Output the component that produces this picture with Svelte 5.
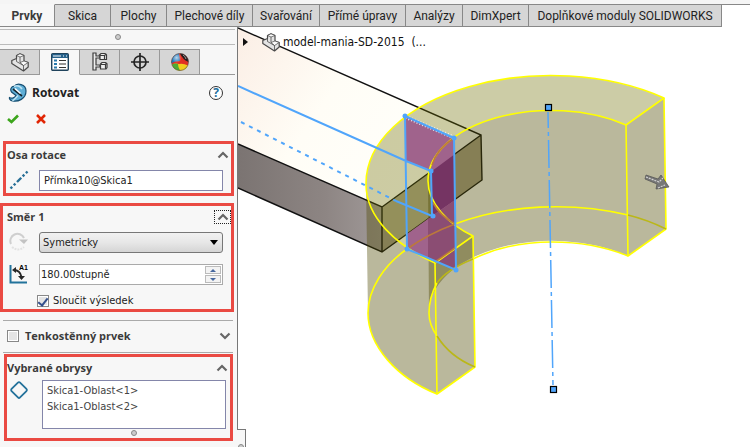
<script>
  const tabs = [
    { label: 'Prvky', width: 55 },
    { label: 'Skica', width: 56 },
    { label: 'Plochy', width: 56 },
    { label: 'Plechové díly', width: 86 },
    { label: 'Svařování', width: 67 },
    { label: 'Přímé úpravy', width: 86 },
    { label: 'Analýzy', width: 57 },
    { label: 'DimXpert', width: 66 },
    { label: 'Doplňkové moduly SOLIDWORKS', width: 193 }
  ];
  let active = $state('Prvky');
  let direction = $state('Symetricky');
  let axis = $state('Přímka10@Skica1');
  let angle = $state('180.00stupně');
  let merge = $state(true);
  let thin = $state(false);
  const contours = ['Skica1-Oblast<1>', 'Skica1-Oblast<2>'];
</script>

{#snippet chevron(down)}
  <svg width="12" height="8" viewBox="0 0 12 8"><path d={down ? 'M1.5 1.5L6 6L10.5 1.5' : 'M1.5 6.5L6 2L10.5 6.5'} fill="none" stroke="#666" stroke-width="2.2" /></svg>
{/snippet}

{#snippet part()}
  <svg width="18" height="19" viewBox="0 0 18 19" stroke="#4a4a4a" stroke-linejoin="round">
    <path d="M.8 7.500L5.500 5.500V2.500L9 .8L13 2.500V8L17.200 9.500V14L12.500 18L.8 10.500Z" fill="#e4e4e4" stroke-width="1.200" />
    <path d="M5.500 2.500L9 4L13 2.500L9 .8ZM9 9.500L13 8L17.200 9.500L12.500 12.500Z" fill="#fafafa" stroke-width=".7" />
    <path d="M9 4V9.500M12.500 12.500V18M5.500 5.500V8.500L12.500 12.500" fill="none" stroke-width=".8" />
  </svg>
{/snippet}

<div class="app">
  <nav class="ribbon">
    {#each tabs as tab}
      <button class:active={active === tab.label} style="width:{tab.width}px" onclick={() => (active = tab.label)}>{tab.label}</button>
    {/each}
    <span class="rest"></span>
  </nav>

  <div class="work">
    <aside>
      <div class="grip"><i class="dot"></i></div>
      <div class="modes">
        <button aria-label="Strom modelu">{@render part()}</button>
        <button class="on" aria-label="Vlastnosti">
          <svg width="18" height="18" viewBox="0 0 18 18">
            <rect x=".7" y=".7" width="16.600" height="16.600" rx="1" fill="#fff" stroke="#20435c" stroke-width="1.400" />
            <path d="M1 1H17V5H1Z" fill="#25618b" /><path d="M2 3H10M12 3H13M15 3H16" stroke="#fff" stroke-width="1" />
            <path d="M3 7.500H6M3 11H6M3 14.500H6" stroke="#2879ac" stroke-width="2" />
            <path d="M8 7.500H15M8 11H15M8 14.500H15" stroke="#333" stroke-width="1.200" />
          </svg>
        </button>
        <button aria-label="Konfigurace">
          <svg width="16" height="20" viewBox="0 0 16 20" fill="#eee" stroke="#3c3c3c" stroke-width="1.200">
            <path d="M1 1H4V4H8V6H4V13H8V15H4V18H1Z" /><path d="M7.500 3L9 1.500H13L14.500 3V7.500H8V3Z" /><path d="M8 3.500H12.500L14.500 2M12.500 3.500V7.500" />
            <path d="M8.500 12L10 10.500H13.500L15 12V15.500L14 17H8.500Z" /><path d="M8.500 12.500H13.500V17M13.500 12.500L15 11" />
          </svg>
        </button>
        <button aria-label="Kóty">
          <svg width="18" height="18" viewBox="0 0 18 18" fill="none" stroke="#252525" stroke-width="1.700"><circle cx="9" cy="9" r="6" /><path d="M9 0V18M0 9H18" /></svg>
        </button>
        <button aria-label="Vzhled">
          <svg width="18" height="18" viewBox="0 0 18 18">
            <defs><radialGradient id="shine" cx=".3" cy=".25"><stop offset="0" stop-color="#fff" stop-opacity=".7" /><stop offset=".6" stop-color="#fff" stop-opacity="0" /></radialGradient></defs>
            <circle cx="9" cy="9" r="8.500" fill="#e13024" />
            <path d="M.5 10A8.500 8.500 0 0 1 8 .6Q9 4 9 8Q4 8 .5 10Z" fill="#1a77be" />
            <path d="M8 .6Q12 4 16 12H9Q9 4 8 .6Z" fill="#e13024" />
            <path d="M1 11.500Q4 10 8 11Q12 10 17 12.500A8.500 8.500 0 0 1 1 11.500Z" fill="#f3cd1e" />
            <path d="M1 11.500Q4 10 7 11Q7 14.500 9 17.500A8.500 8.500 0 0 1 1 11.500Z" fill="#4dac34" />
            <path d="M9 .5A8.500 8.500 0 0 1 17.500 9Q12 7 9 .5Z" fill="#271c1c" />
            <path d="M12 2Q14 3 15 6" stroke="#999" fill="none" /><circle cx="9" cy="9" r="8.500" fill="url(#shine)" stroke="#4d4d4d" stroke-width=".6" />
          </svg>
        </button>
      </div>

      <header>
        <svg width="20" height="20" viewBox="0 0 20 20">
          <path d="M6 3.500C9-.5 18 1 18 8C18 16 10 19 4.500 18C2 17.500 1 15.500 1.500 14.500C4 16 7 14.500 8 12.500L3.500 9C1.500 6 4 3 6 3.500Z" fill="#5faed6" stroke="#174f72" stroke-width="1.200" />
          <path d="M6 3.500C9 2 12 3 14 6M10 12.500Q7 16 4.500 18" stroke="#bce2f2" fill="none" stroke-width="1.500" /><path d="M5 6L14 13" stroke="#17232a" stroke-width="1.600" /><path d="M7 5.500L12.500 10.500" stroke="#fff" stroke-width="1.500" />
        </svg>
        <h1>Rotovat</h1>
        <button class="help" aria-label="Nápověda"><span>?</span></button>
      </header>
      <div class="confirm">
        <button aria-label="OK"><svg width="12" height="10" viewBox="0 0 12 10"><path d="M1 5L4.500 8L11 1.500" fill="none" stroke="#3ca51c" stroke-width="2.600" /></svg></button>
        <button aria-label="Storno"><svg width="10" height="10" viewBox="0 0 10 10"><path d="M1 1L9 9M9 1L1 9" stroke="#e12605" stroke-width="2.500" /></svg></button>
      </div>

      <section class="marked axis">
        <h2><label for="axis">Osa rotace</label><button aria-label="Sbalit">{@render chevron(false)}</button></h2>
        <div class="row">
          <svg width="20" height="20" viewBox="0 0 20 20"><path d="M1.500 18.500L18.500 1.500" stroke="#286f96" stroke-width="2.400" stroke-dasharray="2.400 2.200 2.400 2.200 6 2" /></svg>
          <input id="axis" class="field linked" type="text" bind:value={axis} />
        </div>
      </section>

      <section class="marked dir">
        <h2><span>Směr 1</span><button class="focus" aria-label="Sbalit">{@render chevron(false)}</button></h2>
        <div class="row">
          <svg width="20" height="20" viewBox="0 0 20 20" fill="none" stroke="#cfcfcf" stroke-width="2"><path d="M2 12A7 7 0 0 1 15 6" /><path d="M10 7.500H19L15 12Z" fill="#c3c3c3" stroke="none" /><path d="M3 15Q9 20 15 15" stroke-dasharray="2 1" stroke="#e2e2e2" /></svg>
          <span class="combo">
            <select aria-label="Typ směru" bind:value={direction}><option>Symetricky</option><option>Jednosměrně</option></select>
          </span>
        </div>
        <div class="row angle">
          <svg width="20" height="20" viewBox="0 0 20 20"><path d="M1.500 1V18.500H18" fill="none" stroke="#22739b" stroke-width="2" /><path d="M5 6Q11 6 12.500 13" fill="none" stroke="#262626" stroke-width="1.800" /><path d="M3 6L7 3V9ZM9 12H16L12.500 16Z" fill="#262626" /><text x="10" y="6">A1</text></svg>
          <div class="field spin">
            <input aria-label="Úhel" type="text" bind:value={angle} />
            <span class="steps"><button aria-label="Zvýšit"></button><button class="down" aria-label="Snížit"></button></span>
          </div>
        </div>
        <label class="check"><input type="checkbox" bind:checked={merge} />Sloučit výsledek</label>
      </section>

      <section class="thin">
        <h2><label><input type="checkbox" bind:checked={thin} />Tenkostěnný prvek</label><button aria-label="Rozbalit">{@render chevron(true)}</button></h2>
      </section>

      <section class="marked contours">
        <h2><span>Vybrané obrysy</span><button aria-label="Sbalit">{@render chevron(false)}</button></h2>
        <div class="row">
          <svg width="20" height="20" viewBox="0 0 20 20"><rect x="4" y="4" width="12" height="12" rx="1.500" transform="rotate(45 10 10)" fill="none" stroke="#24729b" stroke-width="1.800" /></svg>
          <ul>{#each contours as c}<li>{c}</li>{/each}</ul>
        </div>
        <i class="dot"></i>
      </section>
      <div class="notch"><i class="dot"></i></div>
    </aside>

    <main>
      <div class="tree">
        <svg class="expand" width="5" height="8" viewBox="0 0 5 8"><path d="M0 0L5 4L0 8Z" fill="#111" /></svg>
        {@render part()}<span>model-mania-SD-2015&nbsp; (...</span>
      </div>
      <svg class="scene" viewBox="238 27 512 420" preserveAspectRatio="xMinYMin meet">
        <defs>
          <linearGradient id="top" x1="0" y1="0" x2="1" y2=".5"><stop offset="0" stop-color="#fbeee5" /><stop offset=".45" stop-color="#fffdf6" /><stop offset="1" stop-color="#fffffb" /></linearGradient>
          <linearGradient id="front" x1="0" y1="0" x2="1" y2="0"><stop offset="0" stop-color="#7b7472" /><stop offset=".6" stop-color="#8d8583" /><stop offset="1" stop-color="#a09998" /></linearGradient>
        </defs>
        <path d="M238 28L481 135L382 207L238 144Z" fill="url(#top)" />
        <path d="M238 144L382 207V252L238 188Z" fill="url(#front)" />
        <path d="M382 207L481 135L482 180L382 252Z" fill="#aaa38c" />
        <path d="M238 28L481 135L482 180L382 252L238 188M238 144L382 207L481 135M382 207V252" fill="none" stroke="#111" stroke-width="1.400" />

        <path d="M664 98A185 108 0 0 0 366 184C366 218 397 246 435 263L473 236C448 224 428 203 428 181A123 70 0 0 1 626 125Z" fill="#6d6d00" fill-opacity=".35" />
        <g fill="#4c4900" fill-opacity=".39">
          <path d="M626 125A123 70 0 0 0 428 181L429 313A123 71 0 0 1 628 256Z" />
          <path d="M366 184C366 218 397 246 435 263L437 394C397 378 368 346 368 313Z" />
          <path d="M435 263L473 236L475 367L437 394Z" />
          <path d="M626 125L664 98L666 229L628 256Z" />
        </g>

        <path d="M405 116L454 138L456 270L407 249V234L432 216V171L406 161Z" fill="#a0638c" />
        <path d="M432 171L455 154V200L432 216Z" fill="#753463" />
        <path d="M428 219L455 200L456 270L428 258Z" fill="#8b4d73" />
        <path d="M406 117L453 137" stroke="#eee" stroke-width="4" stroke-dasharray="1 2" />

        <g fill="none" stroke="#ff0" stroke-width="1.600" stroke-linejoin="round">
          <path d="M664 98A185 108 0 0 0 366 184C366 218 397 246 435 263L473 236C448 224 428 203 428 181A123 70 0 0 1 626 125Z" />
          <path d="M435 263L437 394L475 367L473 236M626 125L628 256L666 229L664 98" />
          <path d="M437 394C397 378 368 346 368 313C368 289 384 265 407 249M455 224A185 106 0 0 1 628 215" />
          <path d="M437 283C431 294 429 303 429 313C429 322 432 329 437 336M473 259Q508 242 552 242Q594 242 628 256" />
          <path d="M437 336C445 349 458 360 475 367M437 283Q446 270 473 259M628 215Q648 220 666 229" stroke="#bab719" />
          <path d="M407 249Q428 234 455 224M454 138C443 145 435 155 432 165M433 203C438 212 446 219 455 224M435 262L455 248" stroke="#bc793b" />
        </g>
        <g fill="none" stroke="#50a5fb" stroke-width="2">
          <path d="M238 86L406 161L431 171L432 216L396 201M405 116L454 138L456 270L407 249Z" />
          <path d="M241 122L396 201" stroke-dasharray="4 5" />
          <path d="M548 112L553 385" stroke-width="1.500" stroke-dasharray="28 4 4 4" stroke-dashoffset="12" />
        </g>
        <g fill="#50a5fb"><circle cx="405" cy="116" r="2.500" /><circle cx="454" cy="138" r="2.500" /><circle cx="431" cy="171" r="2.500" /><circle cx="433" cy="216" r="2.500" /><circle cx="407" cy="249" r="2.500" /><circle cx="456" cy="270" r="2.500" /></g>
        <g fill="#50a5fb" stroke="#000" stroke-width="1.200"><rect x="545.500" y="104.500" width="6" height="6" /><rect x="550.500" y="386.500" width="6" height="6" /></g>
        <path d="M646 175L658 179L661 175L669 187L656 189L657 184L645 179Z" fill="#777" stroke="#505050" stroke-width=".7" /><path d="M646 177L659 182L663 178M658 188L665 185" stroke="#d4d4d4" fill="none" stroke-width="1.200" stroke-dasharray="2 1" />
      </svg>
    </main>
  </div>
</div>

<style>
  :global(body) { margin: 0; background: #fff; }
  * { box-sizing: border-box; }
  .app { min-height: 100vh; display: flex; flex-direction: column; overflow: hidden; font: 12px/16px "Open Sans", "Noto Sans", sans-serif; color: #222; }
  button { padding: 0; border: 0; background: none; font: inherit; color: inherit; }
  svg { display: block; flex: none; }
  .ribbon { display: flex; height: 27px; padding-top: 4px; background: linear-gradient(#f5f5f5 4px, #fff 4px); font-family: Roboto, "Open Sans", sans-serif; }
  .ribbon button { flex: none; border: 1px solid #888; border-left: 0; background: #d6d6d6; white-space: nowrap; }
  .ribbon button.active { background: #f7f7f7; border-top-color: #f7f7f7; font-weight: 700; color: #3b3b3b; }
  .rest { flex: 1; border-top: 1px solid #888; }
  .work { flex: 1; display: flex; align-items: stretch; }
  aside { position: relative; z-index: 1; flex: none; width: 238px; background: #f7f7f7; border-right: 1px solid #777; padding: 2px 2px 6px 0; }
  .dot { display: block; width: 6px; height: 6px; border: 1px solid #888; border-radius: 50%; background: #ccc; }
  .grip { height: 16px; border: solid #bbb; border-width: 1px 0; display: flex; align-items: center; justify-content: center; }
  .modes { display: flex; height: 26px; margin-top: 4px; border-bottom: 1px solid #999; }
  .modes button { width: 40px; height: 26px; display: flex; align-items: center; justify-content: center; background: #d6d6d6; border: 1px solid #999; border-left: 0; }
  .modes .on { background: #f7f7f7; border-bottom-color: #f7f7f7; }
  header { display: flex; align-items: center; height: 36px; padding: 0 12px 0 8px; gap: 4px; }
  h1 { margin: 0; font-size: 12px; font-weight: 700; }
  .help { margin-left: auto; width: 14px; height: 14px; border: 1px solid #333; border-radius: 50%; display: flex; align-items: center; justify-content: center; color: #246f9e; font-size: 12px; line-height: 12px; font-weight: 700; background: #fff; }
  .confirm { display: flex; height: 16px; gap: 17px; padding-left: 7px; align-items: center; margin-bottom: 14px; }
  section { position: relative; }
  .marked { border: 3px solid #ea4a43; }
  h2 { margin: 0; height: 22px; display: flex; align-items: center; justify-content: space-between; font-size: 11px; font-weight: 700; color: #3b3b3b; }
  h2 button { width: 17px; height: 14px; display: flex; align-items: center; justify-content: center; }
  .focus { border: 1px dotted #222; }
  .axis { height: 55px; margin: 0 1px 7px 3px; padding-left: 1px; }
  .dir { height: 109px; margin-right: 1px; padding-left: 4px; }
  .row { display: flex; gap: 10px; padding-right: 8px; margin-top: 4px; }
  .axis .row { padding-left: 2px; }
  .dir .row { padding-left: 2px; }
  .angle { padding-top: 7px; }
  .angle text { font: bold 7px "Liberation Sans", sans-serif; }
  .field, select { flex: 1; min-width: 0; width: 100%; height: 21px; border: 1px solid #aaa; background: #fff; }
  input[type="text"], select, ul, .check { font-family: "DejaVu Sans Condensed", "DejaVu Sans", sans-serif; font-size: 11px; color: #222; }
  .linked { border-color: #8486aa; padding: 0 4px; color: #444; }
  .combo { position: relative; flex: 1; display: flex; }
  .combo::after { content: ""; position: absolute; right: 5px; top: 8px; border: 4px solid transparent; border-top: 5px solid #000; border-bottom: 0; pointer-events: none; }
  select { appearance: none; border: 1px solid #777; border-radius: 3px; padding: 0 3px; background: linear-gradient(#f1f1f1, #e7e7e7 50%, #d5d5d5); }
  .spin { display: flex; align-items: center; padding: 0 1px; }
  .spin input { flex: 1; min-width: 0; border: 0; padding: 0; background: none; }
  .steps { display: flex; flex-direction: column; width: 16px; gap: 1px; }
  .steps button { height: 8px; border: 1px solid #bbb; background: #f3f3f3; display: flex; align-items: center; justify-content: center; }
  .steps button::before { content: ""; border: 3px solid transparent; border-bottom-color: #48699f; border-top: 0; }
  .steps .down::before { border-top: 3px solid #48699f; border-bottom: 0; }
  .check { display: flex; align-items: center; gap: 4px; margin: 8px 0 0 30px; }
  input[type="checkbox"] { appearance: none; flex: none; width: 12px; height: 12px; margin: 0; border: 1px solid #888; background: #e4e4e4; box-shadow: inset 0 0 0 1px #fff; display: flex; justify-content: center; }
  input[type="checkbox"]:checked::before { content: ""; width: 4px; height: 8px; border: solid #34508c; border-width: 0 2px 2px 0; transform: rotate(38deg); }
  .thin { margin: 8px 2px 1px 3px; padding: 4px 0 5px 4px; border: solid #aaa; border-width: 1px 0; }
  .thin h2 label { display: flex; align-items: center; gap: 6px; }
  .contours { height: 87px; margin: 0 2px 0 4px; }
  .contours .row { padding: 0 4px 0 2px; gap: 13px; margin-top: 1px; }
  ul { flex: 1; height: 49px; margin: 0; padding: 2px 4px; border: 1px solid #8486aa; background: #fff; list-style: none; }
  ul li { color: #444; }
  .contours .dot { margin: 1px auto 0; position: relative; left: 15px; }
  .notch { position: absolute; left: 237px; bottom: 0; width: 9px; height: 18px; background: #f7f7f7; border: solid #777; border-width: 1px 1px 0 0; overflow: hidden; }
  .notch .dot { margin: 14px 0 0 1px; }
  main { position: relative; flex: 1; min-width: 0; background: #fff; }
  .scene { width: 100%; height: auto; }
  .tree { position: absolute; left: 5px; top: 5px; display: flex; align-items: center; gap: 3px; font: 12px/20px "DejaVu Sans Condensed", "DejaVu Sans", sans-serif; color: #111; white-space: nowrap; }
  .expand { margin-right: 11px; }
</style>
